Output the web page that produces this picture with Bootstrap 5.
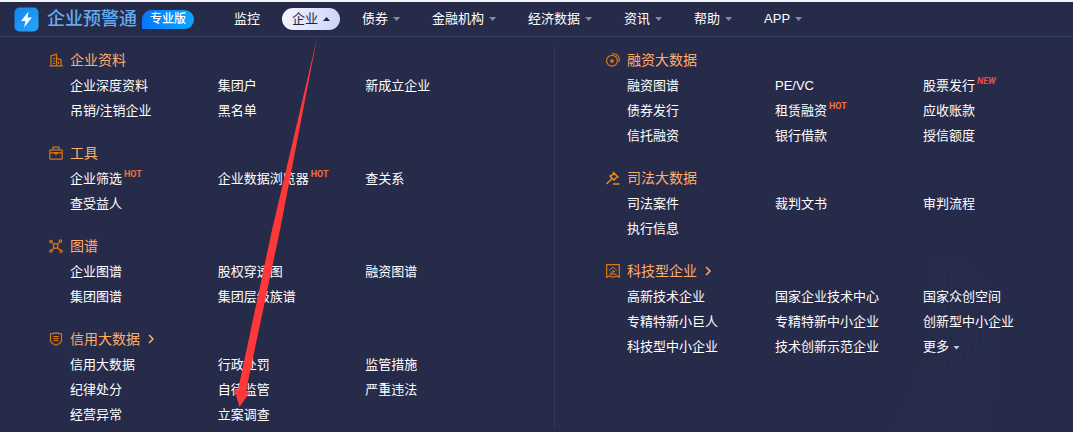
<!DOCTYPE html>
<html lang="zh-CN">
<head>
<meta charset="utf-8">
<meta name="viewport" content="width=device-width, initial-scale=1">
<title>企业预警通</title>
<link href="https://cdn.jsdelivr.net/npm/bootstrap@5.3.0/dist/css/bootstrap.min.css" rel="stylesheet">
<style>
body{background:#272b4a;color:#fff;font-family:"Liberation Sans","Noto Sans CJK SC",sans-serif;font-size:13px;line-height:25px;min-height:100vh;overflow-x:hidden}
a{color:inherit;text-decoration:none}
a:hover{color:#ffad68}
.topbar{border-top:2px solid #f4f5f9;border-bottom:1px solid #35406f;padding:0 14px;height:37px}
.brand-name{font-size:18px;color:#62acf0;font-weight:500;margin-left:8px;white-space:nowrap}
.edition{background:linear-gradient(90deg,#0876fb,#06aaff);border-radius:10px 10px 10px 0;font-size:12px;font-weight:500;line-height:19px;width:52px;margin-left:5px;text-align:center;white-space:nowrap}
.main-nav{gap:12px;margin-left:30px}
.nav-item-btn{border:0;background:none;color:#fff;padding:0 10px;height:22px;line-height:22px;border-radius:11px;display:flex;align-items:center;gap:5px;white-space:nowrap}
.nav-item-btn.current{background:linear-gradient(100deg,#f4f5ff,#cbd3fb);color:#20243f}
.tri{width:7px;height:4px;background:#8389a8;clip-path:polygon(0 0,100% 0,50% 100%)}
.tri-light{background:#c3c7de}
.current .tri{background:#20243f;clip-path:polygon(50% 0,100% 100%,0 100%)}
.mega{display:grid;grid-template-columns:555fr 518fr;padding:10px 0 6px;min-height:calc(100vh - 37px);position:relative;z-index:0}
.half{display:flex;flex-direction:column;gap:17px}
.half-left{padding:0 42px 0 49px;position:relative}
.half-left::after{content:"";position:absolute;right:0;top:0;bottom:0;width:1px;background:#343b62}
.half-right{padding:0 2px 0 51px}
.group-title{display:flex;align-items:center;font-size:14px;line-height:26px;color:#ffad68;margin:0;font-weight:400}
.group-title>svg{width:14px;height:14px;margin-right:7px;flex:none}
.group-title .more-arrow{width:8px;height:10px;margin:0 0 0 7px}
.links{display:grid;grid-template-columns:repeat(3,1fr);padding:0 0 0 21px;margin:0;list-style:none;white-space:nowrap}
.links a{position:relative;display:inline-block}
.tag{position:absolute;left:100%;top:3px;margin-left:2px;font:700 9px/10px Roboto,sans-serif;color:#f2703c}
.tag-new{font-style:italic;color:#f34a4a}
.pointer{position:absolute;left:230px;top:36px;width:92px;height:374px;pointer-events:none}
.waves{position:absolute;right:60px;bottom:0;width:130px;height:170px;pointer-events:none;z-index:-1}
.ico{fill:none;stroke:#d9780f;stroke-width:1.2}
.ico-bright{stroke:#f58a0c}
</style>
</head>
<body class="position-relative">
<header class="topbar d-flex align-items-center">
  <a href="#" class="d-flex align-items-center">
    <svg width="25" height="25" viewBox="0 0 25 25" aria-hidden="true"><defs><linearGradient id="lg" x1="0" y1="0" x2="1" y2="1"><stop stop-color="#1685ee"/><stop offset="1" stop-color="#25a5fa"/></linearGradient></defs><rect x=".5" y=".5" width="24" height="24" rx="5" fill="url(#lg)"/><path d="M14.5 4.500 7 14h4.500L10 20.500 18 10.500h-4.500z" fill="#fff"/></svg>
    <span class="brand-name">企业预警通</span>
    <span class="edition">专业版</span>
  </a>
  <nav class="main-nav d-flex align-items-center">
    <button class="nav-item-btn" type="button">监控</button>
    <button class="nav-item-btn current" type="button" aria-expanded="true">企业<span class="tri"></span></button>
    <button class="nav-item-btn" type="button">债券<span class="tri"></span></button>
    <button class="nav-item-btn" type="button">金融机构<span class="tri"></span></button>
    <button class="nav-item-btn" type="button">经济数据<span class="tri"></span></button>
    <button class="nav-item-btn" type="button">资讯<span class="tri"></span></button>
    <button class="nav-item-btn" type="button">帮助<span class="tri"></span></button>
    <button class="nav-item-btn" type="button">APP<span class="tri"></span></button>
  </nav>
</header>
<main class="mega">
  <svg class="waves" viewBox="0 0 130 170" fill="none" stroke="#29385a" stroke-opacity=".35" aria-hidden="true"><path d="M50 0C52 70 40 120 10 170M56 0C58 70 47 120 19 170M62 0C65 70 54 120 28 170M68 0C72 70 61 120 37 170M74 0C79 70 68 120 46 170M80 0C86 70 75 120 55 170M86 5C93 70 82 120 64 170M92 10C100 70 89 120 73 170M98 16C107 70 96 120 82 170M104 24C114 75 103 125 91 170M110 35C121 80 110 130 100 170"/></svg>
  <div class="half half-left">
    <section>
      <h2 class="group-title"><svg class="ico" viewBox="0 0 14 14"><path d="M.500 12.900h13.500M2 12.500V3l5.500-1.800v11.300M7.500 5.300l4.500 1.400v5.800M4 5.500h2M4 8h2M4 10.500h2M9.500 8.500v2.500"/></svg>企业资料</h2>
      <ul class="links"><li><a href="#">企业深度资料</a></li><li><a href="#">集团户</a></li><li><a href="#">新成立企业</a></li><li><a href="#">吊销/注销企业</a></li><li><a href="#">黑名单</a></li></ul>
    </section>
    <section>
      <h2 class="group-title"><svg class="ico" viewBox="0 0 14 14"><rect x=".8" y="3.800" width="12.400" height="9.400" rx="1"/><path d="M4 3.500V1.200h6v2.300M1 6.800h4.500M8.500 6.800H13M5.500 6.500 7 8.500l1.500-2z"/></svg>工具</h2>
      <ul class="links"><li><a href="#">企业筛选<span class="tag">HOT</span></a></li><li><a href="#">企业数据浏览器<span class="tag">HOT</span></a></li><li><a href="#">查关系</a></li><li><a href="#">查受益人</a></li></ul>
    </section>
    <section>
      <h2 class="group-title"><svg class="ico" viewBox="0 0 14 14"><circle cx="6.700" cy="7" r="2.300"/><circle cx="2" cy="2.500" r="1.200"/><circle cx="11.500" cy="2" r="1.200"/><circle cx="2" cy="12" r="1.200"/><circle cx="12.200" cy="12.200" r="1.200"/><path d="m3 3.400 2 2M10.600 2.900 8.400 5.300M3 11.200l2-2.400M11.300 11.300 8.400 8.600"/></svg>图谱</h2>
      <ul class="links"><li><a href="#">企业图谱</a></li><li><a href="#">股权穿透图</a></li><li><a href="#">融资图谱</a></li><li><a href="#">集团图谱</a></li><li><a href="#">集团层级族谱</a></li></ul>
    </section>
    <section>
      <h2 class="group-title"><svg class="ico" viewBox="0 0 14 14"><path d="M7 .8 12.500 2v6.500c0 2-2.500 3.500-5.500 4.800-3-1.300-5.500-2.800-5.500-4.800V2zM4.300 4.500h5.400M4.300 6.500h5.400M4.300 8.500h5.400"/></svg><a href="#">信用大数据</a><svg class="more-arrow" viewBox="0 0 8 10" fill="none" stroke="#ffad68" stroke-width="1.500"><path d="m2 1 4 4-4 4"/></svg></h2>
      <ul class="links"><li><a href="#">信用大数据</a></li><li><a href="#">行政处罚</a></li><li><a href="#">监管措施</a></li><li><a href="#">纪律处分</a></li><li><a href="#">自律监管</a></li><li><a href="#">严重违法</a></li><li><a href="#">经营异常</a></li><li><a href="#">立案调查</a></li></ul>
    </section>
  </div>
  <div class="half half-right">
    <section>
      <h2 class="group-title"><svg class="ico" viewBox="0 0 14 14"><circle cx="6" cy="7.800" r="5.400"/><path d="M6 .9c5-1 8.500 3.500 6.800 8"/><path d="m6 5.300.8 1.600 1.800.3-1.300 1.200.3 1.800L6 9.400l-1.600.8.300-1.800-1.300-1.200 1.800-.3z" fill="#d9780f" stroke="none"/></svg>融资大数据</h2>
      <ul class="links"><li><a href="#">融资图谱</a></li><li><a href="#">PE/VC</a></li><li><a href="#">股票发行<span class="tag tag-new">NEW</span></a></li><li><a href="#">债券发行</a></li><li><a href="#">租赁融资<span class="tag">HOT</span></a></li><li><a href="#">应收账款</a></li><li><a href="#">信托融资</a></li><li><a href="#">银行借款</a></li><li><a href="#">授信额度</a></li></ul>
    </section>
    <section>
      <h2 class="group-title"><svg class="ico ico-bright" viewBox="0 0 14 14"><path d="M.5 13 6.500 7M3.500 4.500l5 5M7 1l5.500 5.500M4.500 5.500 8 2M8.200 8.800l3.500-3.500M7 13h6.500" stroke-width="1.500"/></svg>司法大数据</h2>
      <ul class="links"><li><a href="#">司法案件</a></li><li><a href="#">裁判文书</a></li><li><a href="#">审判流程</a></li><li><a href="#">执行信息</a></li></ul>
    </section>
    <section>
      <h2 class="group-title"><svg class="ico" viewBox="0 0 14 14"><path d="M.7.700h12.600v12.600L10.500 12 7 13.300 3.500 12 .7 13.300z"/><path d="M3 6.500 7 3l4 3.500M7 5.500V10M7 7.500h2M5 7.500V10M3.500 10.200h7" stroke-width="1"/></svg><a href="#">科技型企业</a><svg class="more-arrow" viewBox="0 0 8 10" fill="none" stroke="#ffad68" stroke-width="1.500"><path d="m2 1 4 4-4 4"/></svg></h2>
      <ul class="links"><li><a href="#">高新技术企业</a></li><li><a href="#">国家企业技术中心</a></li><li><a href="#">国家众创空间</a></li><li><a href="#">专精特新小巨人</a></li><li><a href="#">专精特新中小企业</a></li><li><a href="#">创新型中小企业</a></li><li><a href="#">科技型中小企业</a></li><li><a href="#">技术创新示范企业</a></li><li><a href="#">更多<span class="tri tri-light d-inline-block align-middle ms-1"></span></a></li></ul>
    </section>
  </div>
</main>
<svg class="pointer" viewBox="0 0 92 374" aria-hidden="true"><path d="M87 2 42 194 8 354l-4-2 5.500 19L20 356l-4-1L50 194z" fill="#fe3838"/></svg>
<script src="https://cdn.jsdelivr.net/npm/bootstrap@5.3.0/dist/js/bootstrap.bundle.min.js"></script>
</body>
</html>
